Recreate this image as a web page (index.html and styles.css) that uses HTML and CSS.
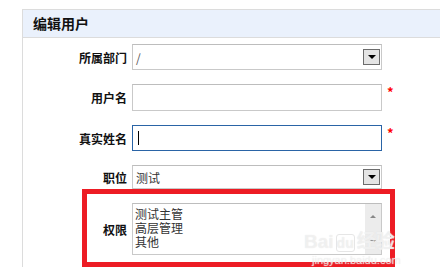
FILE: index.html
```html
<!DOCTYPE html>
<html lang="zh-CN">
<head>
  <meta charset="UTF-8" />
  <title>编辑用户</title>
  <link rel="stylesheet" href="styles.css">
</head>
<body>
  <div class="panel">
    <div class="panel-head">编辑用户</div>
    <div class="panel-body">
      <div class="row">
        <label>所属部门</label>
        <div class="field select r1">
          <span class="val slash">/</span>
          <span class="drop"><span class="tri"></span></span>
        </div>
      </div>

      <div class="row">
        <label>用户名</label>
        <div class="field r2"></div>
        <span class="req">*</span>
      </div>

      <div class="row">
        <label>真实姓名</label>
        <div class="field r3 focus"><span class="caret"></span></div>
        <span class="req">*</span>
      </div>

      <div class="row">
        <label>职位</label>
        <div class="field select r4">
          <span class="val">测试</span>
          <span class="drop"><span class="tri"></span></span>
        </div>
      </div>

      <div class="row">
        <label>权限</label>
        <div class="field listbox">
          <div class="options">
            <div>测试主管</div>
            <div>高层管理</div>
            <div>其他</div>
          </div>
          <div class="scroll">
            <span class="arr up"></span>
            <span class="arr down"></span>
          </div>
        </div>
      </div>
    </div>

    <!-- annotation overlay -->
    <div class="mark"></div>
    <div class="watermark">
      <div class="wm-big">Bai<span class="du">du</span>经验</div>
      <div class="wm-small">jingyan.baidu.com</div>
    </div>
  </div>
</body>
</html>
```

FILE: styles.css
```css
* {
  margin: 0; padding: 0;
  box-sizing: border-box;
}
body {
  background: #fff;
  font-family: "Noto Sans CJK SC", "DejaVu Sans", sans-serif;
  color: #222;
  padding: 9px 0 0 22px;
  height: 267px;
  overflow: hidden;
}
.panel {
  position: relative;
  border-left: 1px solid #dcdcdc;
  border-top: 1px solid #dcdcdc;
  height: 100%;
}
.panel-head {
  height: 28px;
  background: #eaf1fc;
  border-bottom: 1px solid #dcdcdc;
  padding-left: 10px;
  font-size: 14px;
  font-weight: bold;
  line-height: 26px;
  color: #111;
}
.panel-body {
  padding-top: 6px;
}
.row {
  display: grid;
  grid-template-columns: 104px 250px auto;
  column-gap: 5px;
  align-items: center;
  margin-bottom: 14px;
}
.row label {
  text-align: right;
  font-size: 12px;
  font-weight: bold;
  color: #111;
}
.field {
  border: 1px solid #c9c9c9;
  border-top-color: #bdbdbd;
  background: #fff;
  height: 27px;
  font-size: 12px;
  color: #333;
}
.r1 { height: 26px; }
.r3 { height: 26px; }
.r4 { height: 24px; }
.select {
  display: flex;
  align-items: center;
  padding-left: 3px;
  padding-right: 1px;
}
.slash { color: #555; }
.drop {
  margin-left: auto;
  width: 17px;
  height: 16px;
  border: 1px solid #6c6c6c;
  background: #e4e4e4;
  display: flex;
  align-items: center;
  justify-content: center;
}
.tri {
  width: 0; height: 0;
  border-left: 4px solid transparent;
  border-right: 4px solid transparent;
  border-top: 4px solid #000;
}
.focus {
  border-color: #2a64a6;
  display: flex;
  align-items: center;
  padding-left: 5px;
}
.caret {
  width: 1px;
  height: 14px;
  background: #000;
}
.req {
  align-self: start;
  color: #f00;
  font-size: 13px;
  font-weight: bold;
  line-height: 14px;
  margin-top: 1px;
}
.listbox {
  height: 52px;
  display: flex;
}
.options {
  flex: 1;
  padding: 3px 0 0 2px;
  line-height: 14px;
  font-size: 12px;
  color: #333;
}
.scroll {
  width: 16px;
  background: #ececec;
  display: flex;
  flex-direction: column;
  justify-content: space-between;
  align-items: center;
  padding: 11px 0 11px;
}
.arr {
  width: 0; height: 0;
  border-left: 3px solid transparent;
  border-right: 3px solid transparent;
}
.arr.up { border-bottom: 3px solid #888; }
.arr.down { border-top: 3px solid #888; }
.mark {
  position: absolute;
  left: 59px;
  top: 179px;
  width: 313px;
  height: 78px;
  border: 5px solid #ed1c24;
}
.watermark {
  position: absolute;
  left: 281px;
  top: 222px;
  color: rgba(255, 255, 255, 0.5);
  text-shadow: 0 0 1px #e0e0e0;
  font-family: "Liberation Sans", "Noto Sans CJK SC", sans-serif;
  pointer-events: none;
}
.wm-big {
  font-size: 19px;
  font-weight: bold;
  line-height: 20px;
}
.du {
  border: 1px solid #e6e6e6;
  border-radius: 3px;
  margin: 0 2px;
  font-size: 14px;
}
.wm-small {
  font-size: 11px;
  line-height: 14px;
  padding-left: 8px;
}
```
